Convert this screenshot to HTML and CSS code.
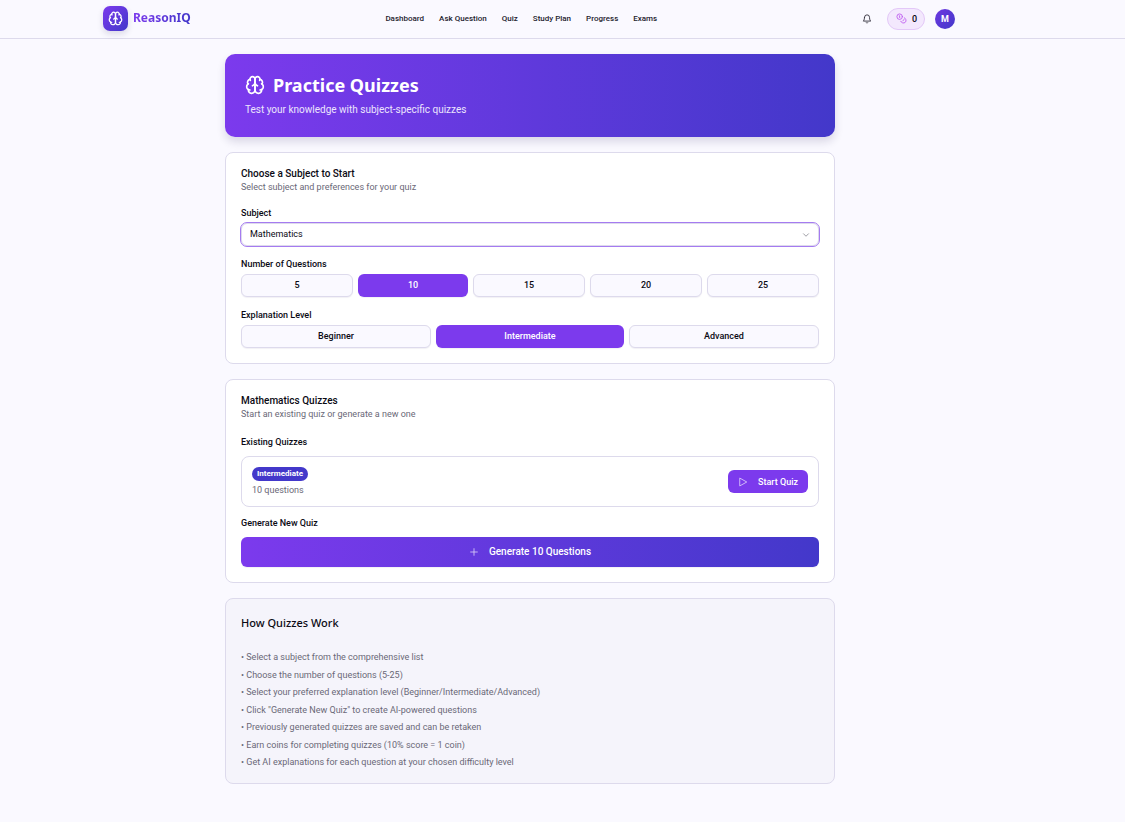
FILE: index.html
```html
<!DOCTYPE html>
<html lang="en">
<head>
<meta charset="utf-8">
<meta name="viewport" content="width=device-width, initial-scale=1">
<title>ReasonIQ - Practice Quizzes</title>
<link rel="stylesheet" href="styles.css">
</head>
<body>
<svg class="sprite" aria-hidden="true">
  <symbol id="brain" viewBox="0 0 24 24">
    <path d="M12 5a3 3 0 1 0-5.997.125 4 4 0 0 0-2.526 5.770 4 4 0 0 0 .556 6.588A4 4 0 1 0 12 18Z"/>
    <path d="M12 5a3 3 0 1 1 5.997.125 4 4 0 0 1 2.526 5.770 4 4 0 0 1-.556 6.588A4 4 0 1 1 12 18Z"/>
    <path d="M15 13a4.500 4.500 0 0 1-3-4 4.500 4.500 0 0 1-3 4"/>
    <path d="M17.599 6.500a3 3 0 0 0 .399-1.375M6.003 5.125A3 3 0 0 0 6.401 6.500M3.477 10.896a4 4 0 0 1 .585-.396M19.938 10.500a4 4 0 0 1 .585.396M6 18a4 4 0 0 1-1.967-.516M19.967 17.484A4 4 0 0 1 18 18"/>
  </symbol>
</svg>
<header class="topbar">
  <div class="topbar-inner">
    <a class="brand" href="#">
      <span class="brand-mark"><svg class="icon" width="15" height="15"><use href="#brain"/></svg></span>
      <span class="brand-name">ReasonIQ</span>
    </a>
    <nav class="nav">
      <a href="#">Dashboard</a>
      <a href="#">Ask Question</a>
      <a href="#">Quiz</a>
      <a href="#">Study Plan</a>
      <a href="#">Progress</a>
      <a href="#">Exams</a>
    </nav>
    <div class="tools">
      <button class="bell" type="button" aria-label="Notifications">
        <svg class="icon" width="10" height="10" viewBox="0 0 24 24"><path d="M6 8a6 6 0 0 1 12 0c0 7 3 9 3 9H3s3-2 3-9"/><path d="M10.300 21a1.940 1.940 0 0 0 3.400 0"/></svg>
      </button>
      <button class="coins" type="button" aria-label="Coins: 0">
        <svg class="icon" width="11" height="11" viewBox="0 0 24 24"><circle cx="8" cy="8" r="6"/><path d="M18.090 10.370A6 6 0 1 1 10.340 18"/><path d="M7 6h1v4"/><path d="m16.710 13.880.700.710-2.820 2.820"/></svg>
        <span>0</span>
      </button>
      <button class="avatar" type="button">M</button>
    </div>
  </div>
</header>

<main class="content">
  <section class="banner">
    <h1 class="banner-title"><svg class="icon" width="20" height="20"><use href="#brain"/></svg>Practice Quizzes</h1>
    <p class="banner-text">Test your knowledge with subject-specific quizzes</p>
  </section>

  <section class="card">
    <h2 class="card-title">Choose a Subject to Start</h2>
    <p class="card-text">Select subject and preferences for your quiz</p>
    <div class="fields">
      <div class="field">
        <label class="label" for="subject">Subject</label>
        <div class="select-wrap">
          <select class="select" id="subject"><option>Mathematics</option></select>
          <svg class="icon chevron" width="10" height="10" viewBox="0 0 24 24"><path d="m6 9 6 6 6-6"/></svg>
        </div>
      </div>
      <div class="field" role="group" aria-labelledby="count-label">
        <span class="label" id="count-label">Number of Questions</span>
        <div class="options">
          <button class="option" type="button">5</button>
          <button class="option selected" type="button">10</button>
          <button class="option" type="button">15</button>
          <button class="option" type="button">20</button>
          <button class="option" type="button">25</button>
        </div>
      </div>
      <div class="field" role="group" aria-labelledby="level-label">
        <span class="label" id="level-label">Explanation Level</span>
        <div class="options">
          <button class="option" type="button">Beginner</button>
          <button class="option selected" type="button">Intermediate</button>
          <button class="option" type="button">Advanced</button>
        </div>
      </div>
    </div>
  </section>

  <section class="card">
    <h2 class="card-title">Mathematics Quizzes</h2>
    <p class="card-text">Start an existing quiz or generate a new one</p>
    <div class="quizzes">
      <h3 class="label">Existing Quizzes</h3>
      <article class="quiz">
        <div class="quiz-info">
          <span class="badge">Intermediate</span>
          <span class="quiz-count">10 questions</span>
        </div>
        <button class="start" type="button">
          <svg class="icon" width="10" height="10" viewBox="0 0 24 24"><path d="M5 3 21 12 5 21Z"/></svg>
          <span>Start Quiz</span>
        </button>
      </article>
      <h3 class="label">Generate New Quiz</h3>
      <button class="generate" type="button">
        <svg class="icon" width="10" height="10" viewBox="0 0 24 24"><path d="M4 12h16M12 4v16"/></svg>
        <span>Generate 10 Questions</span>
      </button>
    </div>
  </section>

  <section class="card card-muted">
    <h2 class="help-title">How Quizzes Work</h2>
    <ul class="help-list">
      <li>• Select a subject from the comprehensive list</li>
      <li>• Choose the number of questions (5-25)</li>
      <li>• Select your preferred explanation level (Beginner/Intermediate/Advanced)</li>
      <li>• Click "Generate New Quiz" to create AI-powered questions</li>
      <li>• Previously generated quizzes are saved and can be retaken</li>
      <li>• Earn coins for completing quizzes (10% score = 1 coin)</li>
      <li>• Get AI explanations for each question at your chosen difficulty level</li>
    </ul>
  </section>
</main>
</body>
</html>
```
FILE: styles.css
```css
:root {
  --violet: #7c3aed;
  --indigo: #4338ca;
  --line: #dddaec;
  --page: #faf9ff;
  --ink: #0b0a14;
  --muted: #6a6877;
  --gutter: 65px;
  --display: "Noto Sans", "Open Sans", sans-serif;
}

* { box-sizing: border-box; margin: 0; padding: 0; }

body {
  background: var(--page);
  color: var(--ink);
  font-family: Roboto, "Noto Sans", sans-serif;
  font-size: 9px;
  line-height: 12px;
}

button, select { font: inherit; color: inherit; border: 0; background: none; }
button { cursor: pointer; }
a { color: inherit; text-decoration: none; }

.sprite { position: absolute; width: 0; height: 0; }

.icon {
  display: block;
  flex: none;
  fill: none;
  stroke: currentColor;
  stroke-width: 2;
  stroke-linecap: round;
  stroke-linejoin: round;
}

.topbar {
  padding: 6px var(--gutter) 7px 0;
  border-bottom: 1px solid var(--line);
}

.topbar-inner {
  display: flex;
  justify-content: space-between;
  align-items: center;
  max-width: 854px;
  margin: 0 auto;
}

.brand { display: flex; align-items: center; gap: 5px; }

.brand-mark {
  display: grid;
  place-items: center;
  width: 25px;
  height: 25px;
  border-radius: 7px;
  color: #fff;
  background: linear-gradient(135deg, var(--violet), var(--indigo));
  box-shadow: 0 3px 6px rgba(30, 20, 80, .14);
}

.brand-name {
  padding-bottom: 2px;
  font-family: var(--display);
  font-size: 12px;
  line-height: 20px;
  font-weight: 700;
  color: transparent;
  background: linear-gradient(90deg, var(--violet), var(--indigo));
  background-clip: text;
  -webkit-background-clip: text;
}

.nav {
  display: flex;
  gap: 15px;
  font-size: 8px;
  font-weight: 500;
  color: #24222e;
}

.tools { display: flex; align-items: center; gap: 10px; padding-right: 2px; }
.bell { padding: 5px 5px 5px 10px; color: #24222e; }

.coins {
  display: flex;
  align-items: center;
  gap: 5px;
  height: 22px;
  padding: 0 7px 0 8px;
  border: 1px solid #e3c8f8;
  border-radius: 11px;
  background: #f3e8fd;
  font-weight: 500;
}
.coins .icon { color: #c060f0; }

.avatar {
  width: 20px;
  height: 20px;
  border-radius: 50%;
  background: linear-gradient(135deg, #6d38e0, var(--indigo));
  color: #fff;
  font-weight: 700;
}

.content {
  display: flex;
  flex-direction: column;
  gap: 15px;
  max-width: 675px;
  margin: 15px auto 38px;
  padding-right: var(--gutter);
}

@media (min-width: 740px) {
  .content {
    margin-left: calc((100% - var(--gutter) - 610px) / 2);
  }
}

.banner {
  padding: 19px 20px 20px;
  border-radius: 10px;
  background: linear-gradient(90deg, var(--violet), var(--indigo));
  color: #fff;
  box-shadow: 0 5px 8px rgba(30, 20, 80, .14);
}

.banner-title {
  display: flex;
  align-items: center;
  gap: 8px;
  font-family: var(--display);
  font-size: 18px;
  line-height: 24px;
  font-weight: 700;
}

.banner-text {
  margin-top: 5px;
  font-size: 10px;
  line-height: 15px;
  color: #ece5fd;
}

.card {
  padding: 15px;
  border: 1px solid var(--line);
  border-radius: 8px;
  background: #fff;
}

.card-title { font-size: 10px; line-height: 12px; font-weight: 500; }
.card-text { padding-top: 1px; color: var(--muted); }

.fields { display: flex; flex-direction: column; gap: 12px; margin-top: 14px; }
.field { display: flex; flex-direction: column; gap: 4px; }
.label { font-size: 9px; line-height: 12px; font-weight: 500; }

.select-wrap { display: grid; align-items: center; }
.select-wrap > * { grid-area: 1 / 1; }

.select {
  appearance: none;
  width: 100%;
  height: 23px;
  padding: 0 8px 2px;
  border: 1px solid var(--line);
  border-radius: 6px;
  outline: 1px solid #a57bf0;
  background: #fff;
}

.chevron { justify-self: end; margin-right: 8px; color: #8c8b94; pointer-events: none; }

.options { display: flex; gap: 5px; }

.option {
  flex: 1 1 0;
  height: 23px;
  padding: 0 8px 2px;
  border: 1px solid var(--line);
  border-radius: 6px;
  background: var(--page);
  font-weight: 500;
  box-shadow: 0 1px 1px rgba(30, 20, 80, .06);
}

.option.selected {
  border: 0;
  background: var(--violet);
  color: #fff;
}

.quizzes { display: flex; flex-direction: column; gap: 8px; margin-top: 16px; }

.quiz {
  display: flex;
  align-items: center;
  justify-content: space-between;
  margin-bottom: 2px;
  padding: 10px;
  border: 1px solid var(--line);
  border-radius: 8px;
}

.quiz-info { display: flex; flex-direction: column; align-items: flex-start; gap: 3px; }

.badge {
  padding: 0 5px;
  border-radius: 7px;
  background: var(--indigo);
  color: #fff;
  font-size: 8px;
  line-height: 14px;
  font-weight: 700;
}

.quiz-count { color: var(--muted); }

.start, .generate {
  display: flex;
  align-items: center;
  justify-content: center;
  gap: 10px;
  border-radius: 6px;
  color: #fff;
  font-weight: 500;
}

.start { height: 23px; padding: 0 10px; background: var(--violet); }

.generate {
  height: 30px;
  background: linear-gradient(90deg, var(--violet), var(--indigo));
  font-size: 10px;
  box-shadow: 0 1px 1px rgba(30, 20, 80, .06);
}

.start .icon, .generate .icon { opacity: .75; }

.card-muted { background: #f5f4fb; }
.help-title { font-family: var(--display); font-size: 11px; line-height: 18px; font-weight: 500; }

.help-list {
  display: grid;
  align-content: space-between;
  min-height: 117px;
  margin-top: 19px;
  list-style: none;
  color: var(--muted);
}
```
